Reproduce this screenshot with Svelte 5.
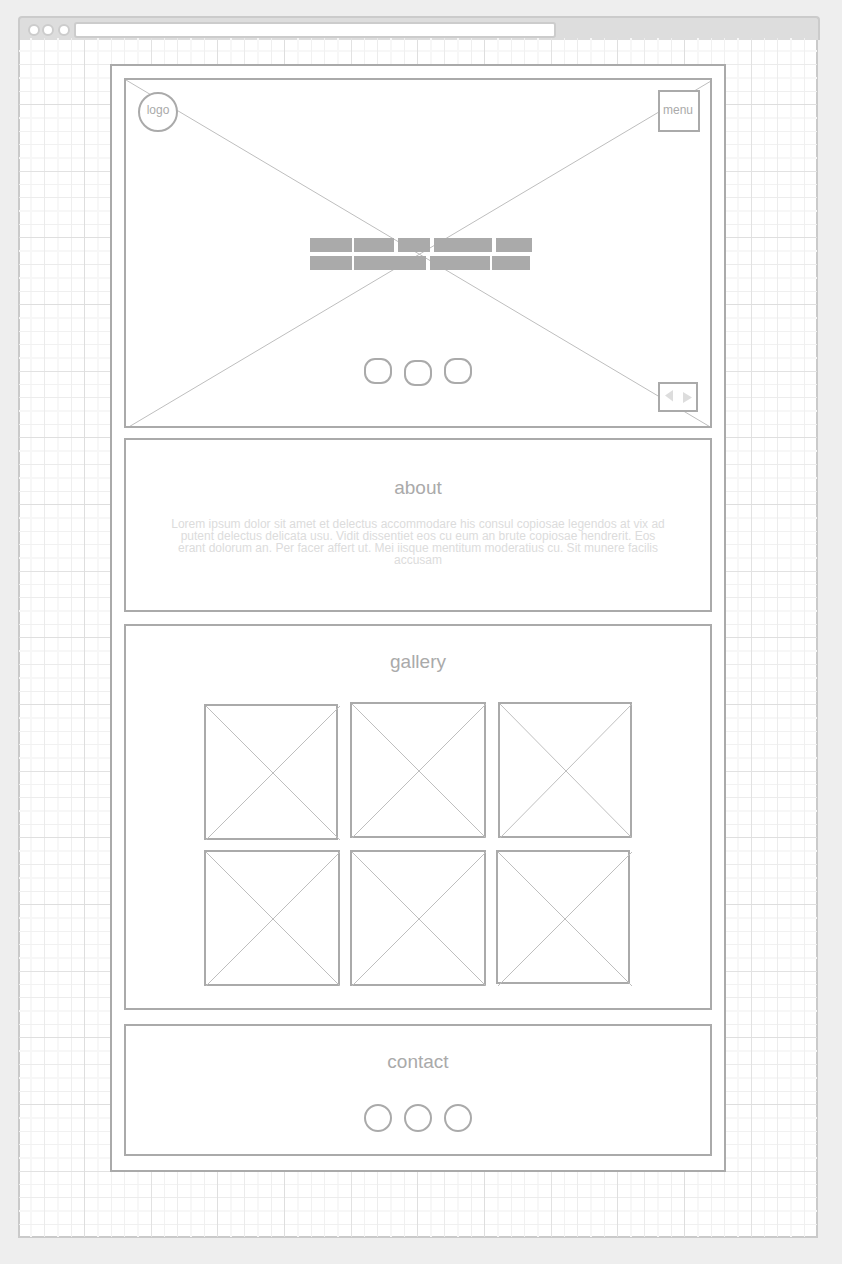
<script>
  const titleRows = [
    [
      { w: 42, gap: 2 },
      { w: 40, gap: 4 },
      { w: 32, gap: 4 },
      { w: 58, gap: 4 },
      { w: 36, gap: 0 }
    ],
    [
      { w: 42, gap: 2 },
      { w: 72, gap: 4 },
      { w: 60, gap: 2 },
      { w: 38, gap: 0 }
    ]
  ];

  const tiles = ['narrow low', '', 'narrow right', '', '', 'narrow short'];

  // Rules of the drafting grid inside one 200px repeat: position, thickness, tone.
  // Ordered from faint to strong so that strong rules stay unbroken.
  const rules = [
    [13, 2, '#f7f7f7'], [53, 2, '#f7f7f7'], [106, 2, '#f7f7f7'], [146, 2, '#f7f7f7'], [173, 2, '#f7f7f7'],
    [80, 1, '#f2f2f2'], [27, 1, '#f1f1f1'], [40, 1, '#f1f1f1'], [120, 1, '#f0f0f0'], [187, 1, '#efefef'],
    [93, 1, '#ececec'], [160, 1, '#ebebeb'], [67, 1, '#e2e2e2'], [133, 1, '#dfdfdf'], [0, 1, '#dedede']
  ];
</script>

<div class="desk">
  <header class="chrome">
    <span class="light"></span>
    <span class="light"></span>
    <span class="light last"></span>
    <input class="address" type="text" aria-label="Address" />
  </header>

  <main class="canvas">
    <svg class="grid" aria-hidden="true">
      <defs>
        <pattern id="drafting" width="200" height="200" patternUnits="userSpaceOnUse" patternTransform="translate(65 66)">
          {#each rules as [at, size, tone]}
            <rect x={at} y="0" width={size} height="200" fill={tone} />
            <rect x="0" y={at} width="200" height={size} fill={tone} />
          {/each}
        </pattern>
      </defs>
      <rect width="100%" height="100%" fill="url(#drafting)" />
    </svg>

    <div class="page">
      <section class="box hero">
        <svg class="cross" viewBox="0 0 584 346" preserveAspectRatio="none" aria-hidden="true">
          <path d="M0 0L586 348M1 348L585 1" />
        </svg>
        <div class="top">
          <a class="logo" href="#home">logo</a>
          <button class="menu" type="button">menu</button>
        </div>
        <div class="title">
          {#each titleRows as row}
            <div class="words">
              {#each row as word}
                <span style="width:{word.w}px;margin-right:{word.gap}px"></span>
              {/each}
            </div>
          {/each}
        </div>
        <div class="bottom">
          <div class="dots soft">
            <button type="button" aria-label="Slide 1"></button>
            <button type="button" aria-label="Slide 2"></button>
            <button type="button" aria-label="Slide 3"></button>
          </div>
          <div class="pager">
            <button type="button" aria-label="Previous">
              <svg width="9" height="12" viewBox="0 0 9 12"><path d="M0 5.500L8 0V11.500Z" /></svg>
            </button>
            <button type="button" class="next" aria-label="Next">
              <svg width="9" height="12" viewBox="0 0 9 12"><path d="M9 5.500L0 0V11Z" /></svg>
            </button>
          </div>
        </div>
      </section>

      <section class="box about">
        <h2>about</h2>
        <p>
          Lorem ipsum dolor sit amet et delectus accommodare his consul copiosae legendos at vix ad putent
          delectus delicata usu. Vidit dissentiet eos cu eum an brute copiosae hendrerit. Eos erant dolorum
          an. Per facer affert ut. Mei iisque mentitum moderatius cu. Sit munere facilis accusam
        </p>
      </section>

      <section class="box gallery">
        <h2>gallery</h2>
        <div class="tiles">
          {#each tiles as kind}
            <div class="tile {kind}">
              <svg viewBox="0 0 134 134" preserveAspectRatio="none" aria-hidden="true">
                <path d="M0 0L134 134M0 134L134 0" />
              </svg>
            </div>
          {/each}
        </div>
      </section>

      <section class="box contact">
        <h2>contact</h2>
        <div class="dots">
          <a href="#one" aria-label="Contact link 1"></a>
          <a href="#two" aria-label="Contact link 2"></a>
          <a href="#three" aria-label="Contact link 3"></a>
        </div>
      </section>
    </div>
  </main>
</div>

<style>
  :global(body) {
    background: #eee;
  }

  .desk,
  .desk * {
    box-sizing: border-box;
  }

  .desk {
    padding: 16px 22px 26px 18px;
    font-family: 'Liberation Sans', Arial, sans-serif;
    font-size: 12px;
    color: #aaa;
  }

  button,
  input {
    margin: 0;
    padding: 0;
    font: inherit;
    color: inherit;
  }

  a {
    color: inherit;
    text-decoration: none;
  }

  .chrome {
    display: flex;
    align-items: flex-start;
    height: 24px;
    padding: 4px 8px 0;
    border: 2px solid #cbcbcb;
    border-bottom: 0;
    border-radius: 4px 4px 0 0;
    background: #ddd;
  }

  .light {
    width: 12px;
    height: 12px;
    margin: 2px 2px 0 0;
    border: 2px solid #ccc;
    border-radius: 50%;
    background: #fff;
  }

  .light.last {
    margin: 2px 4px 0 2px;
  }

  .address {
    width: calc(60% + 13px);
    height: 16px;
    border: 2px solid #ccc;
    border-radius: 3px;
    background: #fff;
  }

  .canvas {
    position: relative;
    margin-right: 2px;
    padding: 24px 90px 64px;
    border: 2px solid #cacaca;
    border-top: 0;
    background: #fff;
  }

  .grid {
    position: absolute;
    top: -2px;
    left: -1px;
    width: calc(100% + 2px);
    height: calc(100% + 3px);
  }

  .page {
    position: relative;
    padding: 12px 12px 14px;
    border: 2px solid #aaa;
    background: #fff;
  }

  .box {
    border: 2px solid #aaa;
    background: #fff;
  }

  h2 {
    margin: 0;
    font-size: 19px;
    line-height: 24px;
    font-weight: 400;
    text-align: center;
  }

  .cross,
  .tile svg {
    display: block;
    overflow: visible;
    fill: none;
    stroke: #bebebe;
    stroke-width: 1;
  }

  .hero {
    position: relative;
    padding: 10px 12px 14px;
  }

  .cross {
    position: absolute;
    top: 0;
    left: 0;
    width: 100%;
    height: 100%;
    overflow: hidden;
  }

  .top {
    position: relative;
    display: flex;
    justify-content: space-between;
    align-items: flex-end;
    margin-right: -2px;
  }

  .logo,
  .menu {
    border: 2px solid #aaa;
    background: #fff;
    line-height: 32px;
    text-align: center;
  }

  .logo {
    width: 40px;
    height: 40px;
    border-radius: 50%;
  }

  .menu {
    display: flex;
    justify-content: center;
    width: 42px;
    height: 42px;
    padding: 2px 2px 0 0;
  }

  .title {
    position: relative;
    display: grid;
    gap: 4px;
    width: 228px;
    margin: 106px auto 88px;
    padding-left: 6px;
  }

  .words {
    display: flex;
    height: 14px;
  }

  .words span {
    background: #aaa;
  }

  .bottom {
    position: relative;
    display: grid;
    grid-template-columns: 1fr auto 1fr;
    height: 54px;
  }

  .dots {
    display: flex;
    justify-content: center;
    align-items: flex-start;
    gap: 12px;
  }

  .soft {
    grid-column: 2;
  }

  .dots a,
  .dots button {
    width: 28px;
    height: 28px;
    border: 2px solid #aaa;
    border-radius: 50%;
    background: #fff;
  }

  .dots button {
    height: 26px;
    border-radius: 11px;
  }

  .dots button:nth-child(2) {
    margin-top: 2px;
  }

  .pager {
    display: flex;
    justify-content: space-between;
    align-items: flex-start;
    justify-self: end;
    align-self: end;
    width: 40px;
    height: 30px;
    padding: 6px 4px 0 5px;
    border: 2px solid #aaa;
    background: #fff;
  }

  .pager button {
    border: 0;
    background: none;
    line-height: 0;
  }

  .pager .next {
    margin-top: 2px;
  }

  .pager svg {
    display: block;
    fill: #ddd;
  }

  .about {
    margin-top: 10px;
    padding: 36px 24px 44px;
  }

  .about p {
    max-width: 502px;
    margin: 18px auto 0;
    line-height: 12px;
    text-align: center;
    color: #dcdcdc;
  }

  .gallery {
    margin-top: 12px;
    padding: 24px 24px 22px;
  }

  .tiles {
    display: grid;
    grid-template-columns: repeat(3, 136px);
    justify-content: center;
    gap: 10px;
    margin-top: 28px;
  }

  .tile {
    width: 136px;
    height: 136px;
    border: 2px solid #aaa;
  }

  .tile svg {
    width: 134px;
    height: 134px;
  }

  .narrow {
    width: 134px;
  }

  .short {
    height: 134px;
  }

  .low {
    margin-top: 2px;
  }

  .right {
    justify-self: end;
  }

  .right svg {
    width: 132px;
  }

  .contact {
    margin-top: 14px;
    padding: 24px 24px 22px;
  }

  .contact .dots {
    margin-top: 30px;
  }
</style>
